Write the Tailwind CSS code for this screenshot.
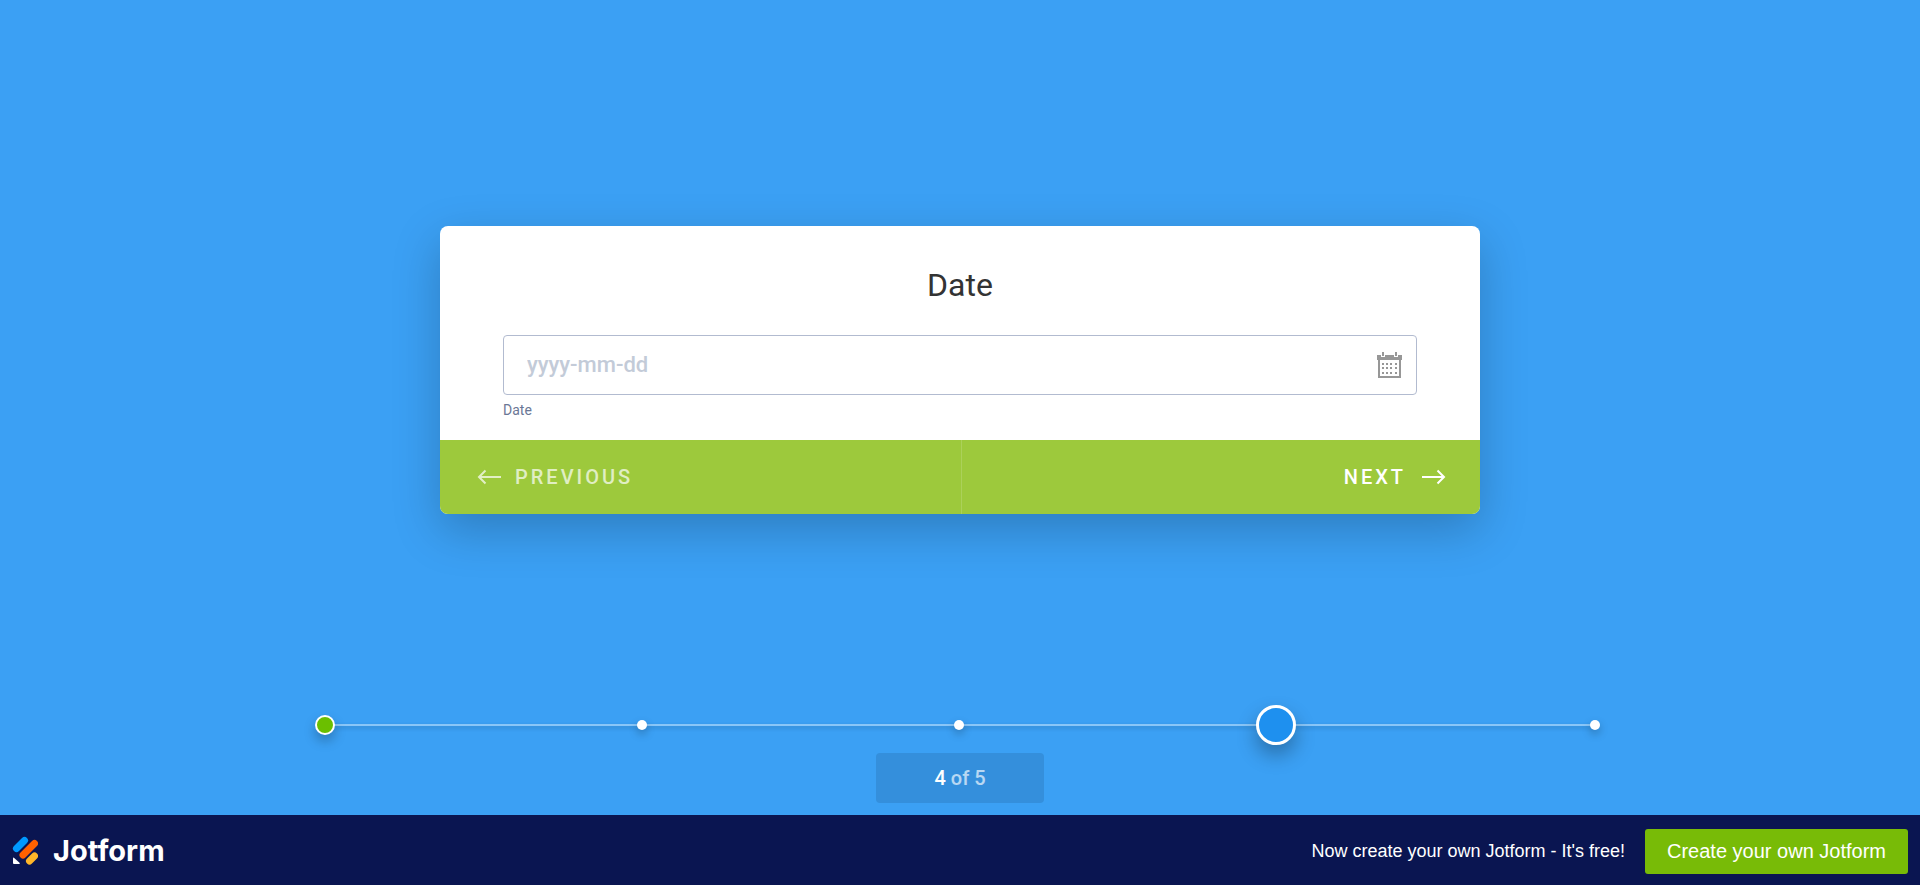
<!DOCTYPE html>
<html lang="en">
<head>
<meta charset="utf-8">
<meta name="viewport" content="width=device-width, initial-scale=1">
<title>Date</title>
<script src="https://cdn.jsdelivr.net/npm/@tailwindcss/browser@4"></script>
</head>
<body class="flex min-h-screen flex-col bg-[#3ba0f4] font-['Roboto',sans-serif]">
<main class="flex flex-1 flex-col items-center px-6 pt-[35px] pb-3">
  <form class="my-auto w-full max-w-[1040px] rounded-lg bg-white shadow-[0_16px_48px_rgba(0,0,0,0.22)]">
    <div class="px-[63px] pt-[38px] pb-5">
      <h1 class="text-center text-[32px] leading-[42px] text-[#333333]">Date</h1>
      <div class="relative mt-[29px]">
        <input id="date" type="text" placeholder="yyyy-mm-dd" class="block h-[60px] w-full rounded border border-[#b2bbd0] bg-white pr-16 pb-[2px] pl-[23px] text-[22px] font-medium text-[#333333] outline-none placeholder:text-[#c3cbd8]">
        <button type="button" aria-label="Open calendar" class="absolute top-[16px] right-[14px] size-[27px] text-[#979797]">
          <svg viewBox="0 0 27 27" class="size-full" fill="currentColor">
            <path d="M1 4h25v5H1z"/>
            <path d="M5 0h4v6H5zM18 0h4v6h-4z" fill="#fff"/>
            <path d="M6 1h2v4H6zM19 1h2v4h-2z"/>
            <path d="M3 8v18h21V8" fill="none" stroke="currentColor" stroke-width="2"/>
            <path d="M6 12h2v2H6zm4 0h2v2h-2zm4 0h2v2h-2zm5 0h2v2h-2zM6 16h2v2H6zm4 0h2v2h-2zm4 0h2v2h-2zm5 0h2v2h-2zM6 21h2v2H6zm4 0h2v2h-2zm4 0h2v2h-2zm5 0h2v2h-2z"/>
          </svg>
        </button>
      </div>
      <label for="date" class="mt-[5px] block text-sm leading-5 text-[#6b7796]">Date</label>
    </div>
    <div class="flex h-[74px] overflow-hidden rounded-b-lg bg-[#9dc93c] text-xl font-medium tracking-[3px]">
      <button type="button" class="flex flex-1 items-center gap-[13px] border-r border-white/15 pl-[37px] text-white/70">
        <svg viewBox="0 0 25 16" class="h-4 w-[25px]" fill="none" stroke="currentColor" stroke-width="2"><path d="M24 8H2M8.500 1.500L2 8l6.500 6.500"/></svg>
        PREVIOUS
      </button>
      <button type="button" class="flex flex-1 items-center justify-end gap-[15px] pr-[34px] text-white">
        NEXT
        <svg viewBox="0 0 25 16" class="h-4 w-[25px]" fill="none" stroke="currentColor" stroke-width="2"><path d="M1 8h22M16.500 1.500L23 8l-6.500 6.500"/></svg>
      </button>
    </div>
  </form>
  <nav aria-label="Progress" class="relative flex h-10 w-full max-w-[1280px] items-center justify-between">
    <span class="absolute inset-x-[5px] h-[2px] bg-white/40 shadow-[0_2px_4px_rgba(0,0,0,0.2)]"></span>
    <button type="button" aria-label="Question 1" class="relative flex w-[10px] justify-center"><span class="size-5 shrink-0 rounded-full border-2 border-white bg-[#6bbf00] shadow-[0_6px_12px_rgba(0,0,0,0.25)]"></span></button>
    <button type="button" aria-label="Question 2" class="relative size-[10px] rounded-full bg-white shadow-[0_4px_8px_rgba(0,0,0,0.25)]"></button>
    <button type="button" aria-label="Question 3" class="relative size-[10px] rounded-full bg-white shadow-[0_4px_8px_rgba(0,0,0,0.25)]"></button>
    <button type="button" aria-label="Question 4" class="relative flex w-[10px] justify-center"><span class="size-10 shrink-0 rounded-full border-3 border-white bg-[#1e90ef] shadow-[0_10px_20px_rgba(0,0,0,0.3)]"></span></button>
    <button type="button" aria-label="Question 5" class="relative flex w-3 justify-end"><span class="size-[10px] rounded-full bg-white shadow-[0_4px_8px_rgba(0,0,0,0.25)]"></span></button>
  </nav>
  <p class="mt-2 h-[50px] w-[168px] rounded bg-[#348fdc] text-center text-xl leading-[50px] font-medium text-white">4 <span class="text-white/65">of 5</span></p>
</main>
<footer class="flex h-[70px] items-center bg-[#0a1551] px-3 pt-[2px] font-['Liberation_Sans',sans-serif] text-white">
  <a href="#" aria-label="Jotform" class="flex items-center gap-[15px]">
    <svg viewBox="0 1 26 30" class="h-[30px] w-[26px]" stroke-linecap="round" stroke-width="7">
      <path d="M4.500 13.500L12.500 5.500" stroke="#0099ff"/><path d="M11 20L22.500 8.500" stroke="#ff6100"/><path d="M17.500 26L22.500 21" stroke="#ffb629"/>
      <path d="M1 23.500q0-1.500 1.200-.5l5.300 4.800q1 1.200-.5 1.200H2q-1 0-1-1z" fill="#fff" stroke="none"/>
    </svg>
    <span class="font-['Inter',sans-serif] text-[29px] leading-10 font-bold">Jotform</span>
  </a>
  <p class="ml-auto text-lg">Now create your own Jotform - It's free!</p>
  <a href="#" class="ml-5 flex h-[45px] items-center rounded-[3px] bg-[#78bb07] px-[22px] text-xl">Create your own Jotform</a>
</footer>
</body>
</html>
